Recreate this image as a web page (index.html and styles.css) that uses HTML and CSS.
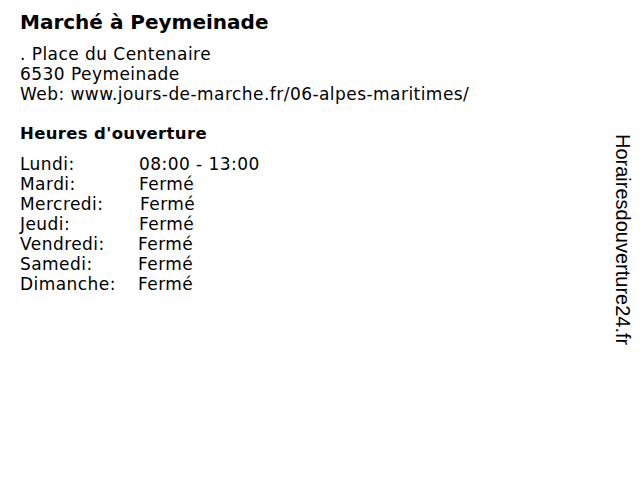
FILE: index.html
```html
<!DOCTYPE html>
<html lang="fr">
<head>
<meta charset="utf-8">
<link rel="stylesheet" href="styles.css">
</head>
<body>
<div class="card">
  <h1 class="title">Marché à Peymeinade</h1>
  <div class="address">
    <div>. Place du Centenaire</div>
    <div>6530 Peymeinade</div>
    <div>Web: www.jours-de-marche.fr/06-alpes-maritimes/</div>
  </div>
  <h2 class="subtitle">Heures d'ouverture</h2>
  <div class="hours">
    <span>Lundi:</span><span>08:00 - 13:00</span>
    <span>Mardi:</span><span>Fermé</span>
    <span>Mercredi:</span><span class="v1">Fermé</span>
    <span>Jeudi:</span><span>Fermé</span>
    <span>Vendredi:</span><span class="v-1">Fermé</span>
    <span>Samedi:</span><span class="v-1">Fermé</span>
    <span>Dimanche:</span><span class="v-1">Fermé</span>
  </div>
</div>
<div class="brand">Horairesdouverture24.fr</div>
</body>
</html>
```
FILE: styles.css
```css
html, body {
  margin: 0;
  padding: 0;
  background: #fff;
}
body {
  font-family: "DejaVu Sans", Verdana, sans-serif;
  color: #000;
  width: 640px;
  height: 480px;
  position: relative;
}
.card {
  padding: 10px 20px;
}
.title {
  font-size: 20px;
  font-weight: bold;
  line-height: 24px;
  margin: 0 0 10px 0;
}
.address {
  font-size: 17px;
  letter-spacing: 0.45px;
  line-height: 20px;
}
.subtitle {
  font-size: 16.5px;
  letter-spacing: 0.35px;
  font-weight: bold;
  line-height: 20px;
  margin: 20px 0 10px 0;
}
.hours {
  display: grid;
  grid-template-columns: 119px auto;
  font-size: 17px;
  letter-spacing: 0.45px;
  line-height: 20px;
  justify-items: start;
}
.v1 { margin-left: 1px; }
.v-1 { margin-left: -1px; }
.brand {
  position: absolute;
  top: 134px;
  right: 6px;
  writing-mode: vertical-rl;
  font-family: "Liberation Sans", Arial, sans-serif;
  font-size: 20px;
  line-height: 22px;
  color: #000;
}
```
